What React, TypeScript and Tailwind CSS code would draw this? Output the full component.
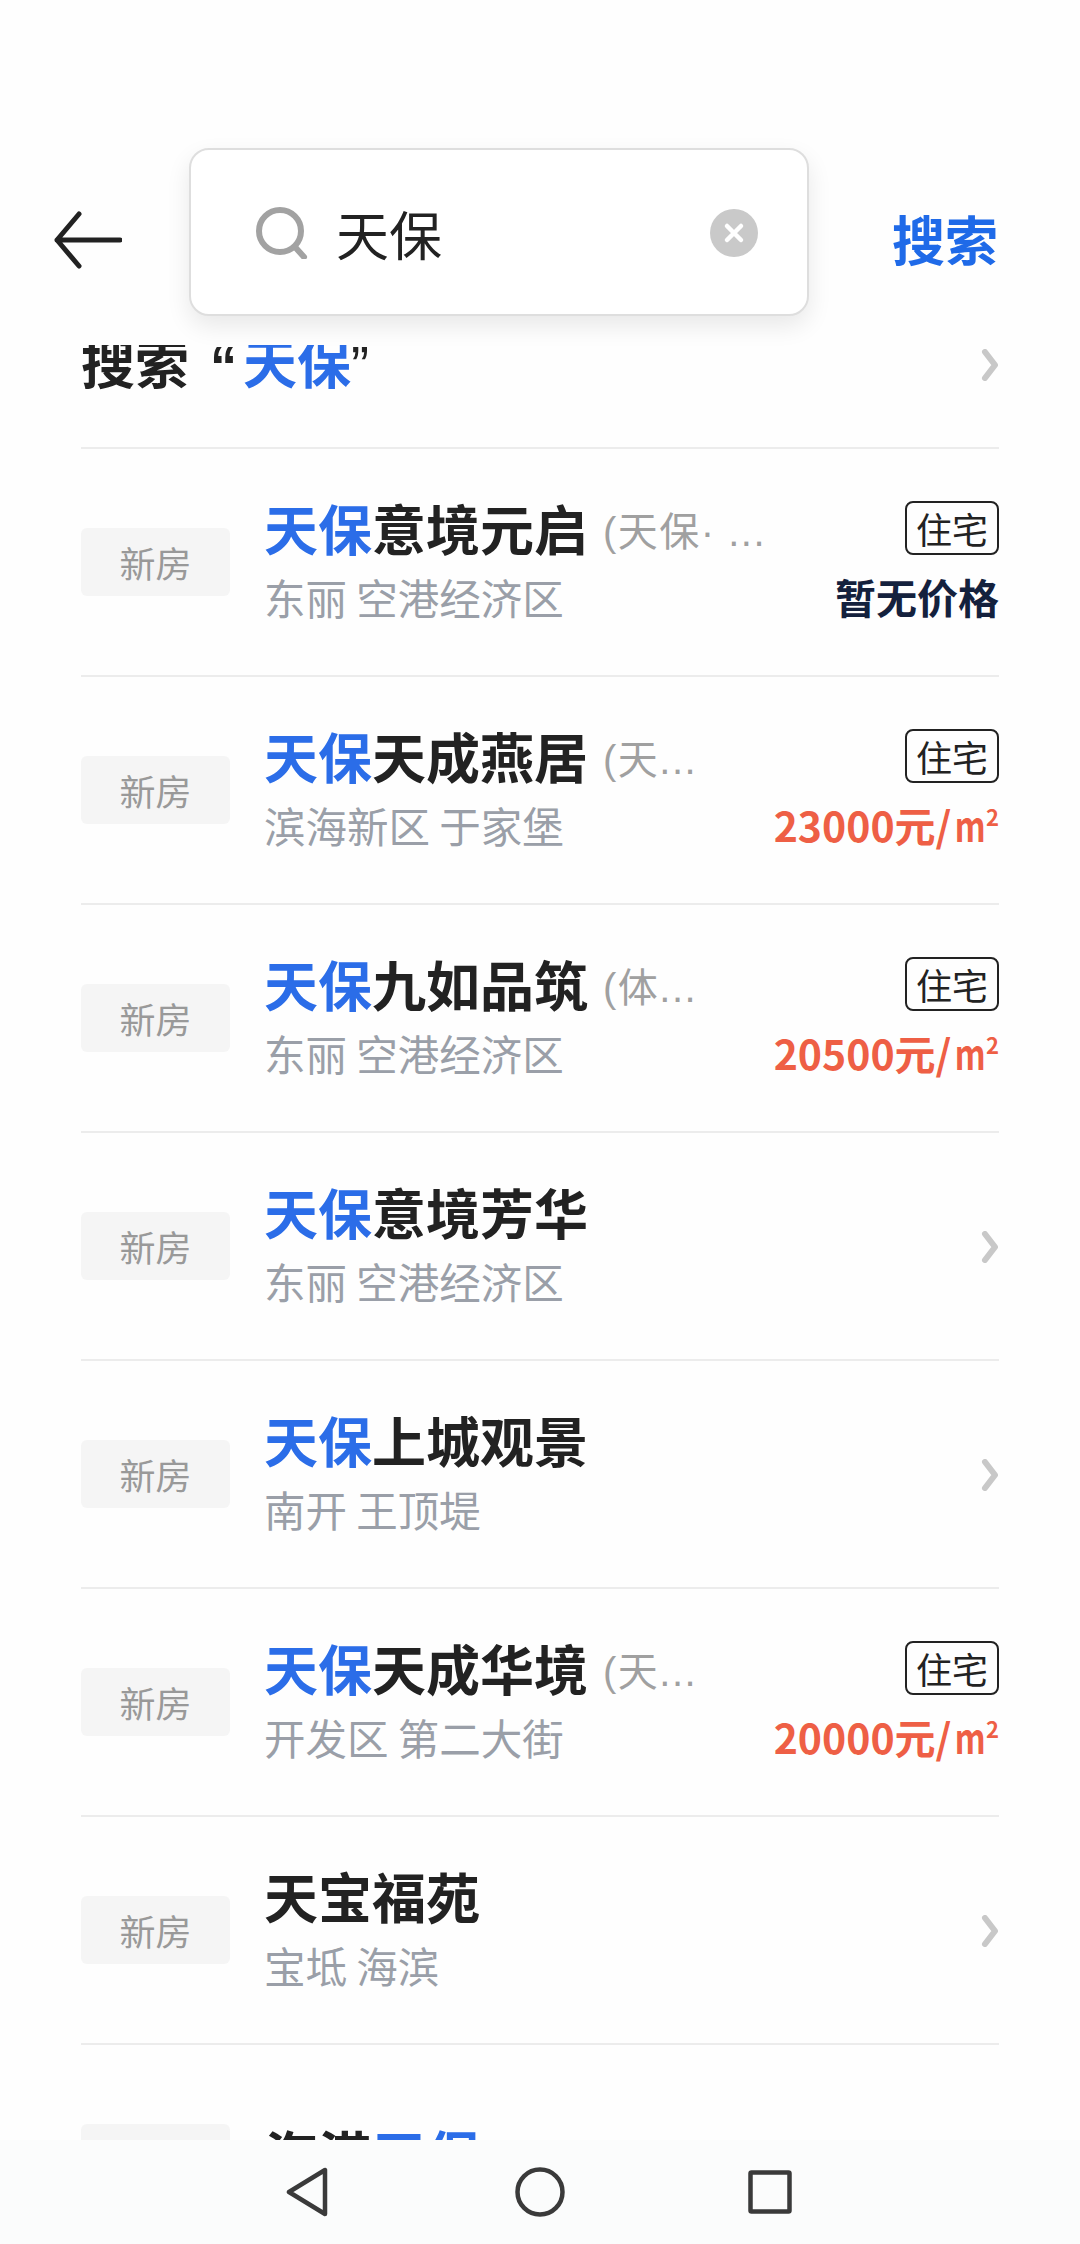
interface Estate {
  hit: string
  before?: string
  name: string
  alias?: string
  area?: string
  price?: string
  noPrice?: boolean
}

const estates: Estate[] = [
  { hit: '天保', name: '意境元启', alias: '(天保· ...', area: '东丽 空港经济区', noPrice: true },
  { hit: '天保', name: '天成燕居', alias: '(天...', area: '滨海新区 于家堡', price: '23000' },
  { hit: '天保', name: '九如品筑', alias: '(体...', area: '东丽 空港经济区', price: '20500' },
  { hit: '天保', name: '意境芳华', area: '东丽 空港经济区' },
  { hit: '天保', name: '上城观景', area: '南开 王顶堤' },
  { hit: '天保', name: '天成华境', alias: '(天...', area: '开发区 第二大街', price: '20000' },
  { hit: '', name: '天宝福苑', area: '宝坻 海滨' },
  { hit: '天保', before: '海港', name: '' },
]

function Arrow() {
  return (
    <svg className="shrink-0" width="18" height="32" viewBox="0 0 18 32" fill="none" stroke="#c8c8c8" strokeWidth="6" strokeLinecap="round" strokeLinejoin="round">
      <path d="M4 3l10 13L4 29" />
    </svg>
  )
}

function EstateRow({ estate }: { estate: Estate }) {
  const hasTag = estate.price || estate.noPrice

  return (
    <div className="h-[228px] shrink-0 flex items-center border-b-2 border-[#ececec]">
      <div className="w-[149px] h-[68px] shrink-0 flex items-center justify-center bg-[#f5f5f5] rounded-[6px] text-[36px] text-[#999999]">
        新房
      </div>
      <div className="ml-[34px] flex-1 min-w-0 -mt-[8px]">
        <div className="flex items-center h-[72px] whitespace-nowrap">
          <span className="text-[54px] font-bold text-[#222222] leading-none">
            {estate.before}
            <span className="text-[#2b6de8]">{estate.hit}</span>
            {estate.name}
          </span>
          {estate.alias && (
            <span className="ml-[15px] mt-[7px] text-[40px] text-[#a0a0a0] leading-none tracking-[1.5px] font-['Liberation_Sans','Noto_Sans_CJK_SC',sans-serif]">
              {estate.alias}
            </span>
          )}
        </div>
        {estate.area && (
          <div className="mt-[6px] text-[41.5px] leading-[54px] text-[#9a9fa8] whitespace-nowrap">{estate.area}</div>
        )}
      </div>
      {hasTag ? (
        <div className="flex flex-col items-end shrink-0 -mt-[1px]">
          <div className="w-[94px] h-[54px] flex items-center justify-center border-2 border-[#222222] rounded-[8px] text-[36px] text-[#222222] leading-none">
            住宅
          </div>
          {estate.noPrice ? (
            <div className="mt-[14px] text-[41px] leading-[54px] font-bold text-[#14213d]">暂无价格</div>
          ) : (
            <div className="mt-[14px] text-[41px] leading-[54px] font-bold text-[#ee5f45] whitespace-nowrap">
              {estate.price}元/<span className="inline-block -ml-[5px] scale-x-[0.78] origin-right">m</span>
              <sup className="text-[22px] -top-[16px] relative align-baseline">2</sup>
            </div>
          )}
        </div>
      ) : (
        <div className="mt-[2px]">
          <Arrow />
        </div>
      )}
    </div>
  )
}

export default function App() {
  return (
    <div className="w-[1080px] h-[2244px] flex flex-col overflow-hidden bg-[#fefefe] font-['Noto_Sans_CJK_SC','Noto_Sans',sans-serif]">
      {/* Header */}
      <div className="relative z-10 h-[345px] shrink-0 bg-[#fefefe] pt-[148px] flex items-start">
        <svg className="ml-[54px] mt-[63px] shrink-0" width="68" height="58" viewBox="0 0 68 58" fill="none" stroke="#222222" strokeWidth="5" strokeLinecap="round" strokeLinejoin="round">
          <path d="M66 29H3M25 3 3 29l22 26" />
        </svg>
        <div className="ml-[67px] w-[620px] h-[168px] shrink-0 flex items-center pl-[65px] pr-[49px] bg-white border-2 border-[#dedede] rounded-[20px] shadow-[0_10px_24px_rgba(0,0,0,0.09)]">
          <svg className="shrink-0 mt-[2px]" width="52" height="52" viewBox="0 0 52 52" fill="none" stroke="#a2a2a2" strokeWidth="6" strokeLinecap="round">
            <circle cx="24" cy="24" r="21" />
            <path d="M39 40l9 10" />
          </svg>
          <span className="ml-[28px] text-[53px] leading-none text-[#222222] mt-[2px]">天保</span>
          <span className="ml-auto w-[48px] h-[48px] mt-[1px] rounded-full bg-[#c9c9c9] flex items-center justify-center">
            <svg width="22" height="22" viewBox="0 0 22 22" stroke="#ffffff" strokeWidth="4.5" strokeLinecap="round">
              <path d="M4 4l14 14M18 4 4 18" />
            </svg>
          </span>
        </div>
        <span className="ml-[83px] mt-[64px] text-[53px] leading-none font-bold text-[#1f6ae8]">搜索</span>
      </div>

      {/* Results */}
      <div className="flex-1 min-h-0 overflow-hidden px-[81px]">
        <div className="-mt-[9px] h-[113px] border-b-2 border-[#ececec]">
          <div className="h-[54px] flex items-center">
            <div className="flex-1 text-[54px] font-bold leading-none text-[#222222] whitespace-nowrap">
              搜索
              <span className="ml-[21px] font-['Liberation_Sans',sans-serif]">“</span>
              <span className="ml-[6px] text-[#2b6de8]">天保</span>
              <span className="font-['Liberation_Sans',sans-serif] font-normal">”</span>
            </div>
            <div className="mt-[4px]">
              <Arrow />
            </div>
          </div>
        </div>
        {estates.map((estate, i) => (
          <EstateRow key={i} estate={estate} />
        ))}
      </div>

      {/* Android nav bar */}
      <div className="relative z-10 h-[104px] shrink-0 bg-[#fbfcfc] flex items-center justify-center pr-[3px] pb-[1px]">
        <svg width="42" height="50" viewBox="0 0 42 50" fill="none" stroke="#3a3a3a" strokeWidth="4.5" strokeLinejoin="round">
          <path d="M39 3v44L3 25z" />
        </svg>
        <svg className="ml-[187px]" width="50" height="50" viewBox="0 0 50 50" fill="none" stroke="#3a3a3a" strokeWidth="4.5">
          <circle cx="25" cy="25" r="22.5" />
        </svg>
        <svg className="ml-[183px]" width="44" height="44" viewBox="0 0 44 44" fill="none" stroke="#3a3a3a" strokeWidth="4.5" strokeLinejoin="round">
          <rect x="2.5" y="2.5" width="39" height="39" rx="1" />
        </svg>
      </div>
    </div>
  )
}
